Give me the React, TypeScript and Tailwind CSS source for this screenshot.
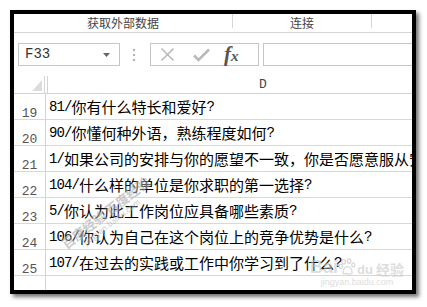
const rows = [
  { n: '19', text: '81/你有什么特长和爱好?' },
  { n: '20', text: '90/你懂何种外语，熟练程度如何?' },
  { n: '21', text: '1/如果公司的安排与你的愿望不一致，你是否愿意服从安排?' },
  { n: '22', text: '104/什么样的单位是你求职的第一选择?' },
  { n: '23', text: '5/你认为此工作岗位应具备哪些素质?' },
  { n: '24', text: '106/你认为自己在这个岗位上的竞争优势是什么?' },
  { n: '25', text: '107/在过去的实践或工作中你学习到了什么?' },
  { n: '26', text: '' },
]

const mono = "font-['Liberation_Mono',monospace]"
const cjk = "font-['Noto_Sans_CJK_SC','Noto_Sans',sans-serif]"

// ascii parts are half width (like SimSun), cjk parts full width
function CellText({ text }: { text: string }) {
  const parts = text.split(/([\x00-\x7f]+)/).filter(Boolean)
  return (
    <>
      {parts.map((p, i) =>
        /^[\x00-\x7f]+$/.test(p) ? (
          <span key={i} className={`${mono} text-[14px] tracking-[-0.9px]`}>{p}</span>
        ) : (
          <span key={i} className={`${cjk} text-[15px]`}>{p}</span>
        )
      )}
    </>
  )
}

export default function App() {
  return (
    <div className="w-[427px] h-[307px] bg-white relative overflow-hidden">
      <div className="ml-[10px] mt-[10px] w-[406px] h-[284px] border-4 border-black bg-white shadow-[3px_3px_4px_rgba(0,0,0,0.55)] overflow-hidden flex flex-col">

        {/* Ribbon group labels */}
        <div className="h-[19px] border-b border-[#d4d4d4] flex items-start shrink-0">
          <div className={`w-[218px] h-[18px] flex items-center justify-center text-[12px] text-[#444] ${cjk}`}>
            获取外部数据
          </div>
          <div className="w-px h-[14px] bg-[#d6d6d6]" />
          <div className={`w-[138px] h-[18px] flex items-center justify-center text-[12px] text-[#444] ${cjk}`}>
            连接
          </div>
          <div className="w-px h-[14px] bg-[#d6d6d6]" />
        </div>

        {/* Formula bar */}
        <div className="mt-[10px] h-[23px] flex shrink-0">
          <div className="ml-[4px] w-[102px] h-full border border-[#c6c6c6] flex items-center justify-between pl-[6px] pr-[9px]">
            <span className={`${mono} text-[14px] text-[#333]`}>F33</span>
            <svg width="7" height="4" viewBox="0 0 7 4">
              <path d="M0 0h7L3.5 4z" fill="#666" />
            </svg>
          </div>
          <div className="ml-[13px] w-[2px] flex flex-col justify-center gap-[3px]">
            <div className="w-[2px] h-[2px] bg-[#b0b0b0]" />
            <div className="w-[2px] h-[2px] bg-[#b0b0b0]" />
            <div className="w-[2px] h-[2px] bg-[#b0b0b0]" />
          </div>
          <div className="ml-[15px] w-[109px] h-full border border-[#c6c6c6] flex items-center pl-[9px]">
            <svg width="15" height="15" viewBox="0 0 15 15">
              <path d="M1.5 1.5l12 12M13.5 1.5l-12 12" stroke="#b9b9b9" strokeWidth="1.6" />
            </svg>
            <svg className="ml-[18px]" width="17" height="14" viewBox="0 0 17 14">
              <path d="M1 7.5l4.5 4.5L16 1.5" stroke="#b9b9b9" strokeWidth="2.6" fill="none" />
            </svg>
            <span className="ml-[14px] font-['Liberation_Serif',serif] italic font-bold text-[#555] leading-none">
              <span className="text-[21px]">f</span>
              <span className="text-[15px]">x</span>
            </span>
          </div>
          <div className="ml-[4px] flex-1 h-full border border-r-0 border-[#c6c6c6]" />
        </div>

        {/* Column header */}
        <div className="mt-[10px] h-[18px] border-b border-[#d4d4d4] flex shrink-0">
          <div className="w-[31px] border-r border-[#d4d4d4] flex items-end justify-end pr-[2px] pb-[2px]">
            <svg width="10" height="11" viewBox="0 0 10 11">
              <path d="M10 0v11H0z" fill="#dcdcdc" />
            </svg>
          </div>
          <div className="w-[2px]" />
          <div className={`flex-1 border-l border-[#d4d4d4] pl-[211px] flex items-center ${mono} text-[13px] text-[#444]`}>
            D
          </div>
        </div>

        {/* Rows */}
        {rows.map(({ n, text }) => (
          <div key={n} className="h-[26px] border-b border-[#d8d8d8] flex shrink-0">
            <div className={`w-[32px] border-r border-[#d4d4d4] flex items-end justify-center ${mono} text-[13px] leading-[10px] text-[#555]`}>
              {n}
            </div>
            <div className="flex-1 pl-[3px] pb-[3px] flex items-end whitespace-nowrap overflow-hidden leading-[18px] text-black">
              <CellText text={text} />
            </div>
          </div>
        ))}
      </div>

      {/* Watermark: diagonal */}
      <div className={`absolute left-[66px] top-[238px] -rotate-[38deg] origin-left flex flex-col leading-none text-[#a8a8a8] opacity-60 whitespace-nowrap ${cjk} [text-shadow:0_0_2px_#fff]`}>
        <span className="text-[13px] font-bold">百度经验 百度经验</span>
        <span className="text-[8px] ml-[18px] mt-[1px]">jingyan.baidu.com</span>
      </div>

      {/* Watermark: logo */}
      <div className="absolute left-[310px] top-[258px] flex flex-col items-center opacity-60 text-[#c8c8c8] whitespace-nowrap">
        <div className="flex items-end">
          <span className="font-['Liberation_Sans',sans-serif] font-bold text-[18px] leading-none">Bai</span>
          <svg width="17" height="17" viewBox="0 0 22 22" className="mb-[1px] ml-[1px]">
            <g fill="none" stroke="#bdbdbd" strokeWidth="1.6">
              <ellipse cx="6" cy="5" rx="2.3" ry="3" />
              <ellipse cx="13" cy="4" rx="2.3" ry="3" />
              <ellipse cx="18.5" cy="9" rx="2" ry="2.6" />
              <ellipse cx="2.5" cy="11" rx="2" ry="2.6" />
              <path d="M5 19c0-4 3-8 6-8s6 4 6 8c0 2-3 2-6 1.5S5 21 5 19z" />
            </g>
          </svg>
          <span className="font-['Liberation_Sans',sans-serif] font-bold text-[13px] leading-none ml-[1px]">du</span>
          <span className={`${cjk} font-bold text-[14px] leading-none ml-[3px]`}>经验</span>
        </div>
        <span className="font-['Liberation_Sans',sans-serif] text-[9px] leading-none mt-[2px]">jingyan.baidu.com</span>
      </div>
    </div>
  )
}
